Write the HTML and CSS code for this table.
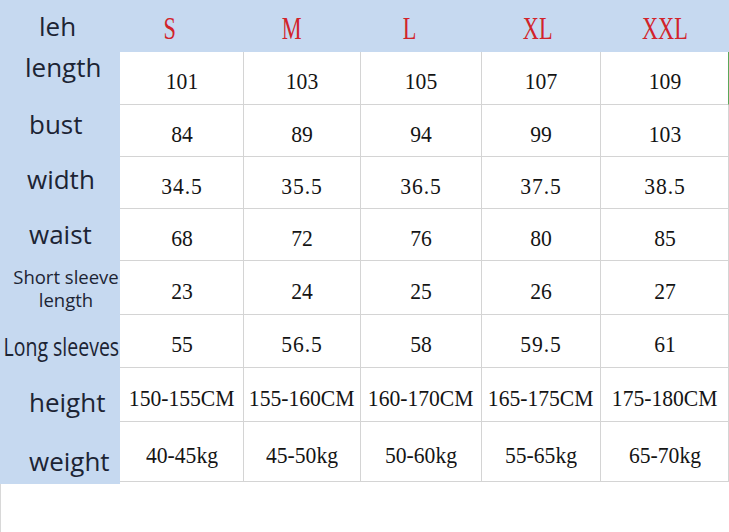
FILE: index.html
```html
<!DOCTYPE html>
<html lang="en">
<head>
<meta charset="utf-8">
<title>Size chart</title>
<link rel="stylesheet" href="styles.css">
</head>
<body>
<div class="sheet">
  <div class="corner">leh</div>
  <div class="sizes">
    <div class="size shift-lg"><span>S</span></div>
    <div class="size shift-md"><span>M</span></div>
    <div class="size shift-lg"><span>L</span></div>
    <div class="size shift-sm"><span>XL</span></div>
    <div class="size"><span>XXL</span></div>
  </div>
  <div class="labels">
    <div class="lab lab-length">length</div>
    <div class="lab lab-bust">bust</div>
    <div class="lab lab-width">width</div>
    <div class="lab lab-waist">waist</div>
    <div class="lab-short">Short sleeve<br>length</div>
    <div class="lab lab-long"><span>Long sleeves</span></div>
    <div class="lab lab-height">height</div>
    <div class="lab lab-weight">weight</div>
  </div>
  <div class="table">
    <div class="cell"><span>101</span></div>
    <div class="cell"><span>103</span></div>
    <div class="cell"><span>105</span></div>
    <div class="cell"><span>107</span></div>
    <div class="cell cell-active"><span>109</span></div>

    <div class="cell"><span>84</span></div>
    <div class="cell"><span>89</span></div>
    <div class="cell"><span>94</span></div>
    <div class="cell"><span>99</span></div>
    <div class="cell"><span>103</span></div>

    <div class="cell"><span class="dec">34.5</span></div>
    <div class="cell"><span class="dec">35.5</span></div>
    <div class="cell"><span class="dec">36.5</span></div>
    <div class="cell"><span class="dec">37.5</span></div>
    <div class="cell"><span class="dec">38.5</span></div>

    <div class="cell"><span>68</span></div>
    <div class="cell"><span>72</span></div>
    <div class="cell"><span>76</span></div>
    <div class="cell"><span>80</span></div>
    <div class="cell"><span>85</span></div>

    <div class="cell"><span>23</span></div>
    <div class="cell"><span>24</span></div>
    <div class="cell"><span>25</span></div>
    <div class="cell"><span>26</span></div>
    <div class="cell"><span>27</span></div>

    <div class="cell"><span>55</span></div>
    <div class="cell"><span class="dec">56.5</span></div>
    <div class="cell"><span>58</span></div>
    <div class="cell"><span class="dec">59.5</span></div>
    <div class="cell"><span>61</span></div>

    <div class="cell"><span>150-155CM</span></div>
    <div class="cell"><span>155-160CM</span></div>
    <div class="cell"><span>160-170CM</span></div>
    <div class="cell"><span>165-175CM</span></div>
    <div class="cell"><span>175-180CM</span></div>

    <div class="cell"><span>40-45kg</span></div>
    <div class="cell"><span>45-50kg</span></div>
    <div class="cell"><span>50-60kg</span></div>
    <div class="cell"><span>55-65kg</span></div>
    <div class="cell"><span>65-70kg</span></div>
  </div>
</div>
<div class="below"></div>
</body>
</html>
```

FILE: styles.css
```css
* { box-sizing: border-box; }

html, body {
  margin: 0;
  padding: 0;
  background: #ffffff;
}

body {
  width: 729px;
  height: 532px;
  overflow: hidden;
}

.sheet {
  display: grid;
  grid-template-columns: 120px 609px;
  grid-template-rows: 52px 432px;
  background: #c6d9f0;
  height: 484px;
}

.corner {
  font-family: "Open Sans", "Noto Sans", sans-serif;
  font-size: 26px;
  line-height: 24px;
  color: #1c2434;
  padding: 14px 0 0 39px;
}

.sizes,
.table {
  display: grid;
  grid-template-columns: 124px 117px 121px 119px 128px;
}

.size {
  display: flex;
  justify-content: center;
  padding-top: 13px;
  font-family: "Liberation Serif", serif;
  font-size: 31px;
  line-height: 31px;
  color: #d2232a;
}

.size span {
  display: inline-block;
  transform: scaleX(0.72);
}

.shift-lg { padding-right: 25px; }
.shift-md { padding-right: 21px; }
.shift-sm { padding-right: 7px; }

.labels {
  display: flex;
  flex-direction: column;
  align-items: flex-start;
  padding: 3px 0 0 29px;
  font-family: "Open Sans", "Noto Sans", sans-serif;
  color: #1c2434;
}

.lab {
  font-size: 26px;
  line-height: 24px;
  white-space: nowrap;
}

.lab-length { margin-left: -4px; }
.lab-bust { margin-top: 33px; }
.lab-width { margin-top: 31px; margin-left: -2px; }
.lab-waist { margin-top: 31px; }

.lab-short {
  margin: 19px 0 0 -17px;
  align-self: stretch;
  text-align: center;
  font-size: 18.5px;
  line-height: 23px;
  white-space: nowrap;
}

.lab-long {
  margin: 23px 1px 0 0;
  align-self: flex-end;
}

.lab-long span {
  display: inline-block;
  transform: scaleX(0.75);
  transform-origin: right center;
}

.lab-height { margin-top: 32px; }
.lab-weight { margin-top: 35px; }

.table {
  grid-template-rows: 53px 52px 52px 52px 54px 53px 54px 60px;
  background: #ffffff;
}

.cell {
  display: flex;
  align-items: center;
  justify-content: center;
  padding-top: 6px;
  border-right: 1px solid #d4d4d4;
  border-bottom: 1px solid #d4d4d4;
  font-family: "Liberation Serif", serif;
  font-size: 24px;
  line-height: 24px;
  color: #141414;
  white-space: nowrap;
}

.cell span {
  display: inline-block;
  transform: scaleX(0.9);
}

.cell .dec {
  letter-spacing: 1px;
}

.cell-active {
  border-right: 1px solid #5aa85a;
}

.below {
  height: 48px;
  border-left: 1px solid #d8d8d8;
}
```
